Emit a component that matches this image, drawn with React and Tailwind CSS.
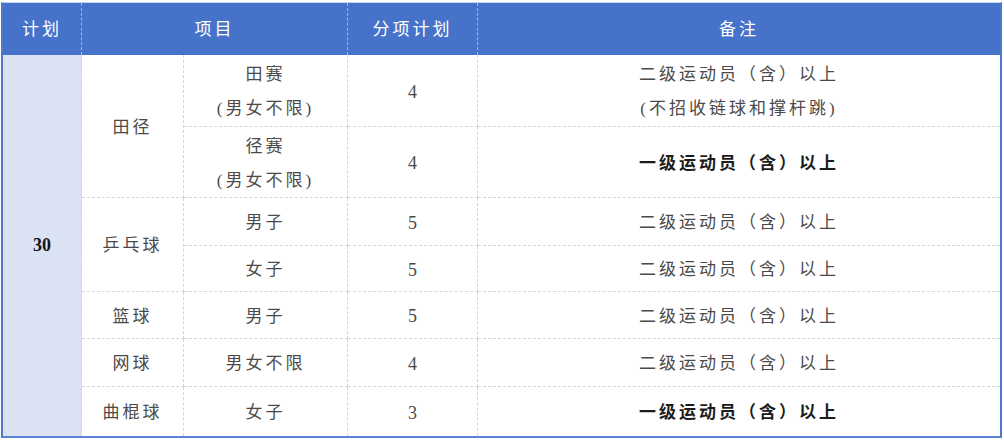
import React from 'react';

const rows = [
  { sub: ['田赛', '(男女不限)'], count: '4', note: ['二级运动员（含）以上', '(不招收链球和撑杆跳)'], bold: false },
  { sub: ['径赛', '(男女不限)'], count: '4', note: ['一级运动员（含）以上'], bold: true },
  { sub: ['男子'], count: '5', note: ['二级运动员（含）以上'], bold: false },
  { sub: ['女子'], count: '5', note: ['二级运动员（含）以上'], bold: false },
  { sub: ['男子'], count: '5', note: ['二级运动员（含）以上'], bold: false },
  { sub: ['男女不限'], count: '4', note: ['二级运动员（含）以上'], bold: false },
  { sub: ['女子'], count: '3', note: ['一级运动员（含）以上'], bold: true },
];

const groups = [
  { name: '田径', end: 1, rowClass: 'row-start-2 row-span-2' },
  { name: '乒乓球', end: 3, rowClass: 'row-start-4 row-span-2' },
  { name: '篮球', end: 4, rowClass: 'row-start-6 row-span-1' },
  { name: '网球', end: 5, rowClass: 'row-start-7 row-span-1' },
  { name: '曲棍球', end: 6, rowClass: 'row-start-8 row-span-1' },
];

const font = "font-['Liberation_Serif','Noto_Sans_CJK_SC',serif]";
const cell = 'flex flex-col items-center justify-center text-center border-dashed border-[#d6d6d6]';
const rowStarts = ['row-start-2', 'row-start-3', 'row-start-4', 'row-start-5', 'row-start-6', 'row-start-7', 'row-start-8'];

const Lines = ({ lines, bold }) => (
  <>
    {lines.map((l, i) => (
      <span
        key={i}
        className={`block leading-[34px] tracking-[3px] ${bold ? 'font-bold text-[#1c1c1c]' : 'text-[#4a4a4a]'}`}
      >
        {l}
      </span>
    ))}
  </>
);

export default function App() {
  return (
    <div className={`w-[1004px] h-[440px] bg-white pt-[2px] pl-[1px] ${font}`}>
      <div className="w-[1001px] border-t border-[#c9d4ea] border-x-2 border-b-2 border-x-[#4d79cf] border-b-[#5b84d4]">
        <div className="grid grid-cols-[79px_102px_164px_130px_1fr] grid-rows-[52px_72px_71px_48px_46px_47px_48px_49px] text-[17px]">
          {/* header */}
          {['计划', '项目', '分项计划', '备注'].map((t, i) => (
            <div
              key={t}
              className={`${cell} pb-[3px] bg-[#4673c9] text-white tracking-[3px] font-['Noto_Sans_CJK_SC',sans-serif] ${
                i === 1 ? 'col-span-2' : ''
              } ${i < 3 ? 'border-r border-r-[#9fb6e2]' : ''}`}
            >
              {t}
            </div>
          ))}

          {/* plan total */}
          <div className={`${cell} row-start-2 row-span-7 col-start-1 bg-[#dae2f4] border-r font-bold text-[18px] text-[#151515]`}>
            30
          </div>

          {groups.map((g) => (
            <div
              key={g.name}
              className={`${cell} pt-[3px] col-start-2 ${g.rowClass} border-r ${g.end < rows.length - 1 ? 'border-b' : ''}`}
            >
              <Lines lines={[g.name]} />
            </div>
          ))}

          {rows.map((r, i) => {
            const last = i === rows.length - 1;
            return (
              <React.Fragment key={i}>
                <div className={`${cell} pt-[3px] col-start-3 ${rowStarts[i]} border-r ${last ? '' : 'border-b'}`}>
                  <Lines lines={r.sub} />
                </div>
                <div className={`${cell} pt-[3px] col-start-4 ${rowStarts[i]} border-r ${last ? '' : 'border-b'} text-[#4a4a4a] text-[18px]`}>
                  {r.count}
                </div>
                <div className={`${cell} pt-[3px] col-start-5 ${rowStarts[i]} ${last ? '' : 'border-b'}`}>
                  <Lines lines={r.note} bold={r.bold} />
                </div>
              </React.Fragment>
            );
          })}
        </div>
      </div>
    </div>
  );
}
